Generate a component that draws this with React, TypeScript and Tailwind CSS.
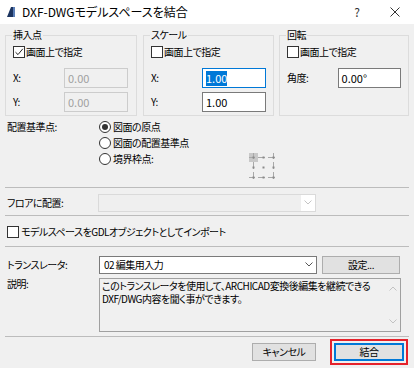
import type { ReactNode } from 'react';

function CheckBox({ checked = false }: { readonly checked?: boolean }) {
  return (
    <span className="flex h-[12px] w-[12px] shrink-0 items-center justify-center border border-[#333333] bg-white">
      {checked && (
        <svg width="10" height="10" viewBox="0 0 10 10">
          <path d="M1.5 5.2 L4 7.6 L8.8 1.8" fill="none" stroke="#222" strokeWidth="1" />
        </svg>
      )}
    </span>
  );
}

function Radio({ checked = false }: { readonly checked?: boolean }) {
  return (
    <span className="flex h-[12px] w-[12px] shrink-0 items-center justify-center rounded-full border border-[#333333] bg-white">
      {checked && <span className="h-[6px] w-[6px] rounded-full bg-[#333333]" />}
    </span>
  );
}

function Field({ children, mode }: { readonly children: ReactNode; readonly mode: 'disabled' | 'normal' | 'focus' }) {
  const cls =
    mode === 'disabled'
      ? 'border-[#cccccc] bg-[#f0f0f0] text-[#a0a0a0]'
      : mode === 'focus'
        ? 'border-[#0078d7] bg-white text-black'
        : 'border-[#7a7a7a] bg-white text-black';
  return <div className={`flex h-[20px] w-[64px] items-center border pl-[3px] text-[11px] tracking-normal ${cls}`}>{children}</div>;
}

function Group({ title, children, className }: { readonly title: string; readonly children: ReactNode; readonly className: string }) {
  return (
    <div className={`relative border border-[#dcdcdc] px-[7px] pt-[10px] pb-[3px] ${className}`}>
      <span className="absolute -top-[8px] left-[6px] bg-[#f0f0f0] px-[1px] leading-[14px]">{title}</span>
      {children}
    </div>
  );
}

function CheckRow({ checked = false }: { readonly checked?: boolean }) {
  return (
    <div className="flex h-[12px] items-center gap-[1px]">
      <CheckBox checked={checked} />
      <span>画面上で指定</span>
    </div>
  );
}

function Chevron({ color }: { readonly color: string }) {
  return (
    <svg width="8" height="5" viewBox="0 0 8 5">
      <path d="M0.5 0.5 L4 4 L7.5 0.5" fill="none" stroke={color} strokeWidth="1" />
    </svg>
  );
}

function RefGrid() {
  const pts = [2, 12, 22];
  return (
    <svg width="30" height="30" viewBox="0 0 30 30">
      <rect x="0" y="0" width="9" height="9" fill="#c8c8c8" />
      {[2, 22].map((y) => pts.map((x) => <line key={`h${x}${y}`} x1={x - 3} y1={y + 2.5} x2={x + 4} y2={y + 2.5} stroke="#a8a8a8" />))}
      {[2, 22].map((x) => pts.map((y) => <line key={`v${x}${y}`} x1={x + 2.5} y1={y - 3} x2={x + 2.5} y2={y + 4} stroke="#a8a8a8" />))}
      {pts.map((y) => pts.map((x) => <rect key={`d${x}${y}`} x={x + 1.5} y={y + 1.5} width="2" height="2" fill="#8a8a8a" />))}
    </svg>
  );
}

function Sep() {
  return <div className="mx-[5px] h-px bg-[#bcbcbc]" />;
}

export default function App() {
  return (
    <div className="h-[368px] w-[414px] overflow-hidden bg-[#f0f0f0] font-['Noto_Sans_CJK_JP',sans-serif] text-[10px] leading-[14px] tracking-[-0.5px] text-black [font-feature-settings:'palt']">
      {/* title bar */}
      <div className="flex h-[24px] items-center bg-white tracking-normal">
        <svg className="ml-[7px]" width="8" height="10" viewBox="0 0 8 10">
          <polygon points="0,10 4,0 6,0 6,10" fill="#1c3460" />
          <polygon points="6,0 8,0 8,10 6,10" fill="#5b7fb8" />
        </svg>
        <span className="ml-[7px] text-[12px]">DXF-DWGモデルスペースを結合</span>
        <span className="ml-auto mr-[30px] text-[12px] text-[#333]">?</span>
        <svg className="mr-[14px]" width="10" height="10" viewBox="0 0 10 10">
          <path d="M0.5 0.5 L9.5 9.5 M9.5 0.5 L0.5 9.5" stroke="#333" strokeWidth="1" />
        </svg>
      </div>

      {/* groups */}
      <div className="mt-[11px] flex px-[5px]">
        <Group title="挿入点" className="w-[132px]">
          <CheckRow checked />
          <div className="mt-[10px] flex h-[20px] items-center">
            <span className="w-[51px]">X:</span>
            <Field mode="disabled">0.00</Field>
          </div>
          <div className="mt-[4px] flex h-[20px] items-center">
            <span className="w-[51px]">Y:</span>
            <Field mode="disabled">0.00</Field>
          </div>
        </Group>
        <Group title="スケール" className="ml-[6px] w-[131px]">
          <CheckRow />
          <div className="mt-[10px] flex h-[20px] items-center">
            <span className="w-[51px]">X:</span>
            <Field mode="focus">
              <span className="bg-[#0078d7] leading-[15px] text-white">1.00</span>
            </Field>
          </div>
          <div className="mt-[4px] flex h-[20px] items-center">
            <span className="w-[51px]">Y:</span>
            <Field mode="normal">1.00</Field>
          </div>
        </Group>
        <Group title="回転" className="ml-[5px] w-[130px]">
          <CheckRow />
          <div className="mt-[10px] flex h-[20px] items-center">
            <span className="w-[51px]">角度:</span>
            <Field mode="normal">0.00°</Field>
          </div>
        </Group>
      </div>

      {/* anchor */}
      <div className="mt-[3px] flex h-[68px] pl-[7px]">
        <span className="w-[92px] leading-[16px]">配置基準点:</span>
        <div className="flex w-[150px] flex-col">
          <div className="flex h-[16px] items-center gap-[2px]">
            <Radio checked />
            <span>図面の原点</span>
          </div>
          <div className="flex h-[16px] items-center gap-[2px]">
            <Radio />
            <span>図面の配置基準点</span>
          </div>
          <div className="flex h-[16px] items-center gap-[2px]">
            <Radio />
            <span>境界枠点:</span>
          </div>
        </div>
        <div className="mt-[34px]">
          <RefGrid />
        </div>
      </div>
      <Sep />

      {/* floor */}
      <div className="flex h-[27px] items-center px-[7px] pt-[2px]">
        <span className="w-[91px]">フロアに配置:</span>
        <div className="flex h-[18px] w-[218px] border border-[#dadada] bg-[#efefef]">
          <div className="ml-auto flex w-[14px] items-center justify-center bg-white">
            <Chevron color="#c4c4c4" />
          </div>
        </div>
      </div>
      <Sep />

      {/* gdl */}
      <div className="flex h-[30px] items-center gap-[2px] pl-[7px] pt-[1px]">
        <CheckBox />
        <span>モデルスペースをGDLオブジェクトとしてインポート</span>
      </div>
      <Sep />

      {/* translator */}
      <div className="mt-[8px] flex h-[19px] items-center px-[7px]">
        <span className="w-[92px]">トランスレータ:</span>
        <div className="flex h-[18px] w-[218px] items-center border border-[#7a7a7a] bg-white pl-[4px]">
          <span>02 編集用入力</span>
          <span className="ml-auto mr-[3px]">
            <Chevron color="#555" />
          </span>
        </div>
        <div className="ml-[5px] flex h-[18px] w-[78px] items-center justify-center border border-[#adadad] bg-[#e1e1e1]">
          設定...
        </div>
      </div>
      <div className="mt-[4px] flex px-[7px]">
        <span className="w-[92px] leading-[11px]">説明:</span>
        <div className="flex h-[54px] w-[302px] border border-[#a0a0a0] bg-[#f0f0f0]">
          <div className="flex-1 whitespace-nowrap pl-[2px] leading-[13px]">
            このトランスレータを使用して、ARCHICAD変換後編集を継続できる
            <br />
            DXF/DWG内容を聞く事ができます。
          </div>
          <div className="flex w-[15px] flex-col items-center justify-between py-[7px]">
            <svg width="8" height="5" viewBox="0 0 8 5">
              <path d="M0.5 4.5 L4 1 L7.5 4.5" fill="none" stroke="#c2c2c2" strokeWidth="1" />
            </svg>
            <Chevron color="#c2c2c2" />
          </div>
        </div>
      </div>
      <div className="mt-[4px]">
        <Sep />
      </div>

      {/* buttons */}
      <div className="mt-[6px] flex justify-end pr-[10px]">
        <div className="flex h-[18px] w-[64px] items-center justify-center border border-[#adadad] bg-[#e1e1e1]">
          キャンセル
        </div>
        <div className="ml-[18px] flex h-[18px] w-[70px] items-center justify-center border-2 border-[#0078d7] bg-[#e1e1e1] outline-2 outline-offset-[2px] outline-[#e5222b] outline-solid">
          結合
        </div>
      </div>
    </div>
  );
}
